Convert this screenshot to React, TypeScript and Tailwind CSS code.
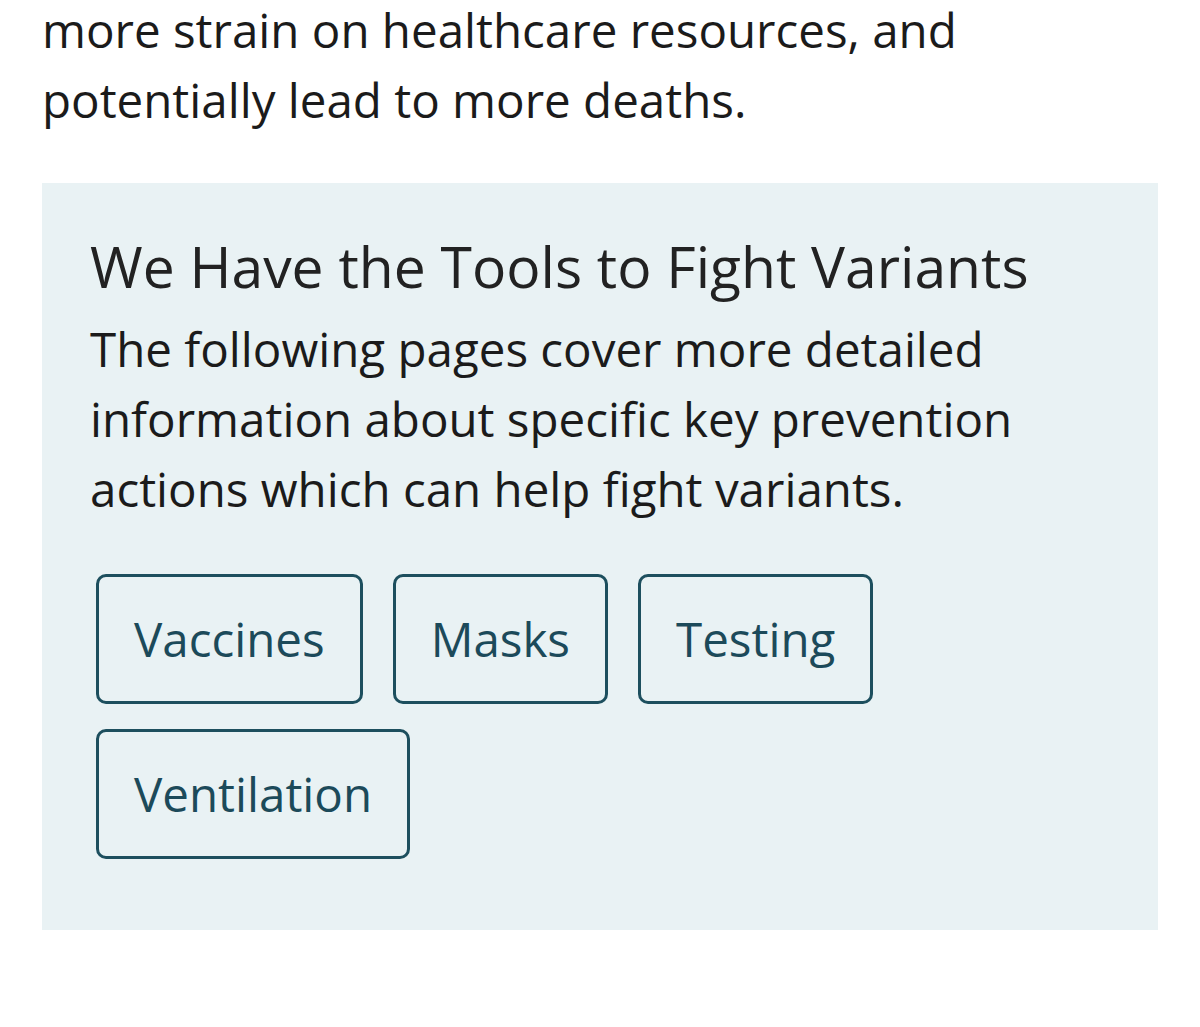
import React from 'react';

const tools = ['Vaccines', 'Masks', 'Testing', 'Ventilation'];

export default function App() {
  return (
    <div className="min-h-[1027px] bg-white font-['Open_Sans',sans-serif] overflow-hidden">
      <div className="pl-[42px] pr-[42px] -mt-[5px]">
        <p className="text-[47.5px] leading-[70px] text-[#1b1b1b]">
          more strain on healthcare resources, and potentially lead to more deaths.
        </p>
        <div className="mt-[48px] bg-[#e9f2f4] pl-[48px] pr-[40px] pt-[50px] pb-[71px]">
          <h2 className="text-[57px] leading-[66px] mb-[15px] text-[#222222]">We Have the Tools to Fight Variants</h2>
          <p className="text-[47.5px] leading-[70px] text-[#1b1b1b] pr-[100px]">
            The following pages cover more detailed information about specific key prevention actions which can help fight variants.
          </p>
          <div className="mt-[50px] ml-[6px] flex flex-wrap gap-x-[30px] gap-y-[25px] max-w-[820px]">
            {tools.map((t) => (
              <a
                key={t}
                href="#"
                className="block border-[3px] border-[#1d4f5e] rounded-[10px] px-[35px] py-[27px] text-[47.5px] leading-[70px] text-[#1c4a5a]"
              >
                {t}
              </a>
            ))}
          </div>
        </div>
      </div>
    </div>
  );
}
